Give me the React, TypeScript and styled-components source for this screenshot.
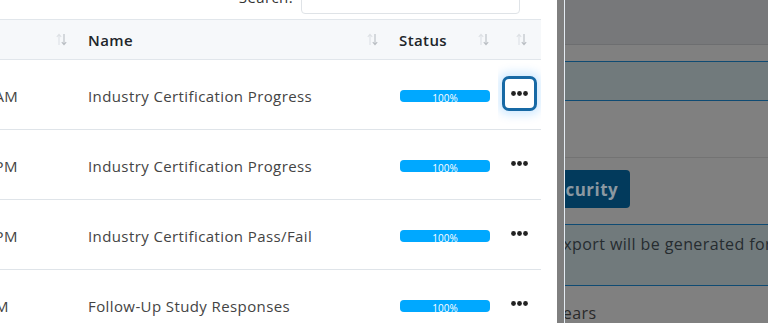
import styled, { createGlobalStyle } from "styled-components";

const GlobalStyle = createGlobalStyle`
  html, body {
    margin: 0;
    padding: 0;
    overflow: hidden;
    font-family: "Open Sans", "Noto Sans", sans-serif;
    letter-spacing: 0.4px;
  }
`;

type Report = {
  created: string;
  name: string;
  progress: number;
  focused?: boolean;
};

const reports: Report[] = [
  { created: "03/18/2024 10:42 AM", name: "Industry Certification Progress", progress: 100, focused: true },
  { created: "03/18/2024 12:05 PM", name: "Industry Certification Progress", progress: 100 },
  { created: "03/18/2024 12:01 PM", name: "Industry Certification Pass/Fail", progress: 100 },
  { created: "03/18/2024 1:11 PM", name: "Follow-Up Study Responses", progress: 100 },
];

const SortIcon = () => (
  <svg width="11" height="13" viewBox="0 0 11 13" fill="none">
    <path d="M3 12V1.5M0.8 3.8L3 1.3L5.2 3.8" stroke="#dde1e5" strokeWidth="1.1" />
    <path d="M8 1v10.5M5.8 9.2L8 11.7L10.2 9.2" stroke="#b9bec3" strokeWidth="1.1" />
  </svg>
);

const Dots = () => (
  <svg width="17" height="5" viewBox="0 0 17 5">
    <circle cx="2.5" cy="2.5" r="2.4" fill="#222" />
    <circle cx="8.5" cy="2.5" r="2.4" fill="#222" />
    <circle cx="14.5" cy="2.5" r="2.4" fill="#222" />
  </svg>
);

const App = () => {
  return (
    <>
      <GlobalStyle />
      <Screen>
        <Panel>
          <PanelInner>
            <Toolbar>
              <SearchLabel>Search:</SearchLabel>
              <SearchInput />
            </Toolbar>
            <Table>
              <thead>
                <tr>
                  <HeadCell $width={226}>
                    <HeadInner>
                      <span>Created</span>
                      <SortIcon />
                    </HeadInner>
                  </HeadCell>
                  <HeadCell $width={311}>
                    <HeadInner>
                      <span>Name</span>
                      <SortIcon />
                    </HeadInner>
                  </HeadCell>
                  <HeadCell $width={111}>
                    <HeadInner>
                      <span>Status</span>
                      <SortIcon />
                    </HeadInner>
                  </HeadCell>
                  <HeadCell $width={43}>
                    <HeadInner $end>
                      <SortIcon />
                    </HeadInner>
                  </HeadCell>
                </tr>
              </thead>
              <tbody>
                {reports.map((r, i) => (
                  <tr key={i}>
                    <Cell>{r.created}</Cell>
                    <Cell>{r.name}</Cell>
                    <Cell>
                      <Progress>
                        <ProgressBar style={{ width: `${r.progress}%` }}>{r.progress}%</ProgressBar>
                      </Progress>
                    </Cell>
                    <Cell $center>
                      <MenuButton $focused={r.focused}>
                        <Dots />
                      </MenuButton>
                    </Cell>
                  </tr>
                ))}
              </tbody>
            </Table>
          </PanelInner>
        </Panel>
        <Strip />
        <Divider />
        <Backdrop>
          <TopBar />
          <Alert $height={40} />
          <Rule />
          <ActionButton>Security</ActionButton>
          <Alert $height={62}>
            <AlertText>Export will be generated for the selected school years</AlertText>
          </Alert>
          <BodyText>School Years</BodyText>
        </Backdrop>
      </Screen>
    </>
  );
};

export default App;

const Screen = styled.div`
  display: flex;
  width: 768px;
  height: 323px;
  overflow: hidden;
`;

const Panel = styled.div`
  flex: none;
  width: 557px;
  height: 100%;
  background: #fff;
  overflow: hidden;
`;

const PanelInner = styled.div`
  margin-top: -20px;
  margin-left: -150px;
  width: 691px;
`;

const Toolbar = styled.div`
  display: flex;
  justify-content: flex-end;
  align-items: center;
  gap: 8px;
  height: 34px;
  padding-right: 21px;
  margin-bottom: 5px;
`;

const SearchLabel = styled.label`
  font-size: 15px;
  color: #333;
`;

const SearchInput = styled.div`
  width: 217px;
  height: 32px;
  border: 1px solid #dfe3e7;
  border-radius: 4px;
`;

const Table = styled.table`
  width: 691px;
  border-collapse: collapse;
  table-layout: fixed;
`;

const HeadCell = styled.th<{ $width: number }>`
  width: ${(p) => p.$width}px;
  height: 40px;
  padding: 0 9px 0 12px;
  box-sizing: border-box;
  background: #f6f8fa;
  border-top: 1px solid #e1e6eb;
  border-bottom: 1px solid #e1e6eb;
  font-size: 15px;
  font-weight: 600;
  color: #212529;
  text-align: left;
`;

const HeadInner = styled.div<{ $end?: boolean }>`
  display: flex;
  align-items: center;
  justify-content: ${(p) => (p.$end ? "flex-end" : "space-between")};
  padding-right: ${(p) => (p.$end ? "5px" : "0")};
`;

const Cell = styled.td<{ $center?: boolean }>`
  height: 67px;
  padding: 2px ${(p) => (p.$center ? "0" : "12px")} 0;
  border-bottom: 1px solid #dfe4e9;
  font-size: 15px;
  color: #444;
  white-space: nowrap;
  overflow: hidden;
  text-align: ${(p) => (p.$center ? "center" : "left")};
  vertical-align: middle;
`;

const Progress = styled.div`
  width: 90px;
  height: 12px;
  margin-left: 1px;
  border-radius: 4px;
  background: #e9ecef;
  display: flex;
`;

const ProgressBar = styled.div`
  height: 12px;
  border-radius: 4px;
  background: #00a8ff;
  color: #fff;
  font-size: 10px;
  letter-spacing: 0;
  line-height: 17px;
  text-align: center;
`;

const MenuButton = styled.button<{ $focused?: boolean }>`
  display: inline-flex;
  align-items: center;
  justify-content: center;
  width: 35px;
  height: 35px;
  padding: 0;
  margin-top: -4px;
  background: #fff;
  border-radius: 7px;
  border: 3px solid ${(p) => (p.$focused ? "#1769a5" : "transparent")};
  box-shadow: ${(p) => (p.$focused ? "0 0 10px 4px rgba(0, 140, 255, 0.18)" : "none")};
  cursor: pointer;
`;

const Strip = styled.div`
  flex: none;
  width: 7px;
  background: #7f7f7f;
`;

const Divider = styled.div`
  flex: none;
  width: 1px;
  background: #e4ebf2;
`;

const Backdrop = styled.div`
  flex: 1;
  display: flex;
  flex-direction: column;
  background: #808080;
  overflow: hidden;
`;

const TopBar = styled.div`
  flex: none;
  height: 44px;
  background: #77787a;
  border-bottom: 1px solid #6d6e70;
  margin-bottom: 16px;
`;

const Alert = styled.div<{ $height: number }>`
  flex: none;
  box-sizing: border-box;
  height: ${(p) => p.$height}px;
  background: #717a7c;
  border-top: 1px solid #0f4b73;
  border-bottom: 1px solid #0f4b73;
  padding: 8px 0 0;
  overflow: hidden;
`;

const Rule = styled.div`
  flex: none;
  height: 1px;
  background: #737373;
  margin-top: 56px;
`;

const ActionButton = styled.div`
  flex: none;
  align-self: flex-start;
  margin: 12px 0 16px -32px;
  height: 38px;
  padding: 0 12px;
  display: flex;
  align-items: center;
  border-radius: 4px;
  background: #023a5c;
  color: #8b98a1;
  font-size: 17px;
  font-weight: 700;
  letter-spacing: 0.5px;
`;

const AlertText = styled.div`
  margin-left: -11px;
  font-size: 16px;
  color: #262c30;
  white-space: nowrap;
`;

const BodyText = styled.div`
  margin: 16px 0 0 -68px;
  font-size: 16px;
  color: #2a2a2a;
  white-space: nowrap;
`;
